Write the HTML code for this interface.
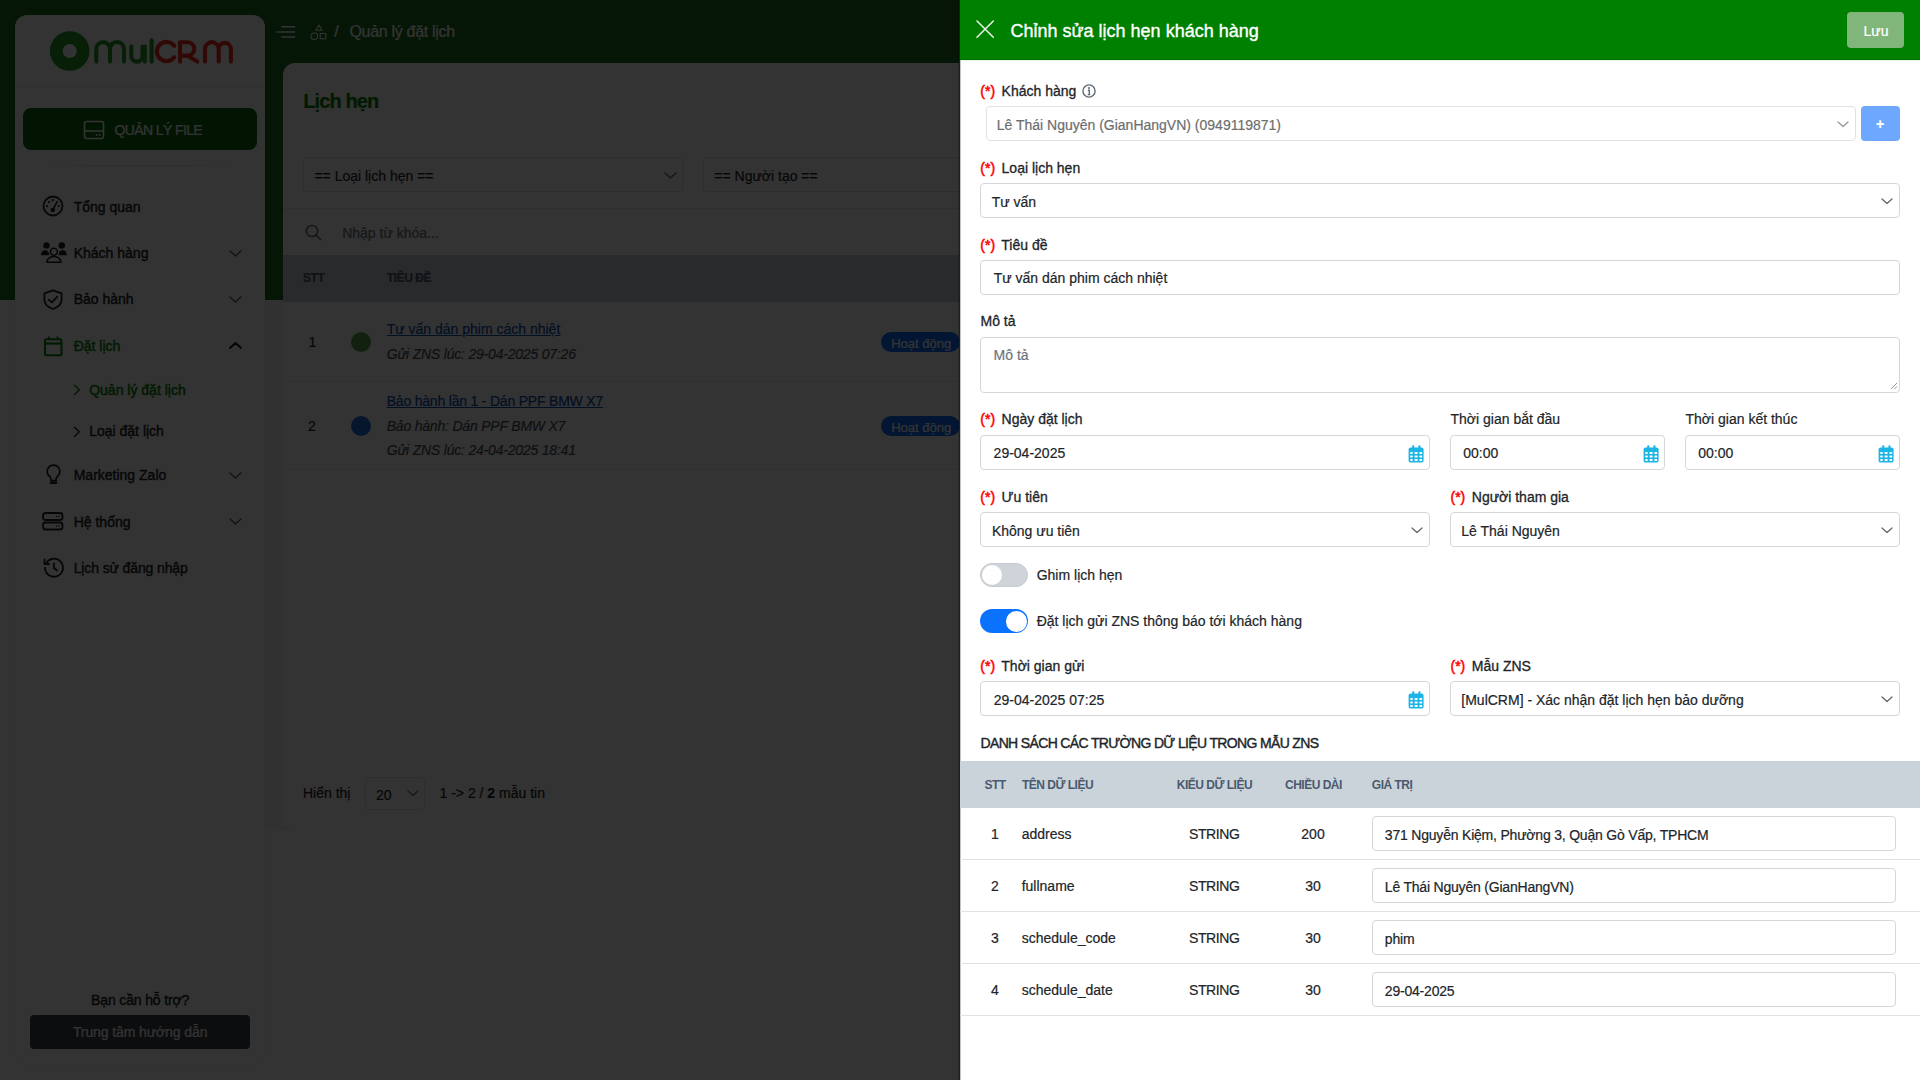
<!DOCTYPE html>
<html lang="vi">
<head>
<meta charset="utf-8">
<style>
*{box-sizing:border-box;margin:0;padding:0}
html,body{width:1920px;height:1080px;overflow:hidden}
body{font-family:"Liberation Sans",sans-serif;font-size:14px;color:#212529;background:#fff;position:relative}
.b{position:absolute}
.t{position:absolute;white-space:nowrap;-webkit-text-stroke:0.2px currentColor}
</style>
</head>
<body>

<div class="b" style="left:0px;top:0px;width:1920px;height:300px;background:#1e6e1e"></div>
<div class="b" style="left:265px;top:300px;width:1655px;height:530px;background:#f3f4f6"></div>
<div class="b" style="left:15px;top:15px;width:250px;height:1050px;background:#fff;border-radius:12px;box-shadow:0 0 3px rgba(0,0,0,.06)"></div>
<div class="b" style="left:283px;top:63px;width:1637px;height:767px;background:#fff;border-radius:12px"></div>
<svg class="b" style="left:45px;top:25px" width="200" height="55" viewBox="0 0 200 55">
<circle cx="24.7" cy="26" r="13.4" fill="none" stroke="#1f9a22" stroke-width="12.8"/>
<g fill="none" stroke="#1f9a22" stroke-width="4.1" stroke-linecap="round" stroke-linejoin="round">
<path d="M51.3 36.6V24a6.85 6.85 0 0 1 13.7 0V36.6M65 24a7 7 0 0 1 14 0V36.6"/>
<path d="M86.3 21.5V31a5.6 5.6 0 0 0 11.2 0V21.5M99.8 21.5V36.6"/>
<path d="M106.6 15.2V36.6"/>
</g>
<g fill="none" stroke="#f03020" stroke-width="4.1" stroke-linecap="round" stroke-linejoin="round">
<path d="M129.2 20.8A9.6 9.6 0 1 0 129.2 32.2"/>
<path d="M135.1 36.6V17.2h7.5a6.7 6.7 0 0 1 0 13.4h-7.5M142.3 30.6L152.3 36.6"/>
<path d="M160 36.6V24a6.85 6.85 0 0 1 13.7 0V36.6M173.7 24a6.1 6.1 0 0 1 12.2 0V36.6"/>
</g>
</svg>
<div class="b" style="left:15px;top:86px;width:250px;height:1px;background:#e9ecef"></div>
<div class="b" style="left:23px;top:108px;width:234px;height:42px;background:#0b6a12;border-radius:8px"></div>
<svg class="b" style="left:83px;top:120px" width="22" height="20" viewBox="0 0 22 20"><rect x="1.5" y="1.5" width="19" height="17" rx="2" fill="none" stroke="#fff" stroke-width="1.6"/><path d="M1.5 11h19" stroke="#fff" stroke-width="1.6"/><circle cx="13.5" cy="15" r="0.9" fill="#fff"/><circle cx="16.5" cy="15" r="0.9" fill="#fff"/></svg>
<div class="t" style="left:114.4px;top:122.85px;font-size:14px;line-height:14px;color:#fff;font-weight:400;font-style:normal;letter-spacing:-0.6px">QUẢN LÝ FILE</div>
<div class="b" style="left:40px;top:165px;width:200px;height:1px;background:linear-gradient(90deg,rgba(0,0,0,0),rgba(0,0,0,.12) 30%,rgba(0,0,0,.12) 70%,rgba(0,0,0,0))"></div>
<svg class="b" style="left:42px;top:195px" width="22" height="22" viewBox="0 0 22 22"><circle cx="11" cy="11" r="9.5" fill="none" stroke="#1e2226" stroke-width="1.8"/><circle cx="10.8" cy="5.2" r="1.1" fill="#1e2226"/><circle cx="6.9" cy="7.1" r="1.1" fill="#1e2226"/><circle cx="5" cy="11.1" r="1.1" fill="#1e2226"/><circle cx="16.8" cy="11.1" r="1.1" fill="#1e2226"/><path d="M15.2 6.6L11 14.6" stroke="#1e2226" stroke-width="1.6" stroke-linecap="round"/><circle cx="10.8" cy="15" r="2.2" fill="#1e2226"/></svg>
<div class="t" style="left:73.7px;top:199.85px;font-size:14px;line-height:14px;color:#1e2226;font-weight:400;font-style:normal;-webkit-text-stroke:0.4px">Tổng quan</div>
<svg class="b" style="left:40px;top:241px" width="28" height="23" viewBox="0 0 28 23"><circle cx="6.5" cy="4.4" r="3.2" fill="#1e2226"/><circle cx="21.8" cy="4.4" r="3.2" fill="#1e2226"/><path d="M0.9 14.2A4.25 5.2 0 0 1 9.4 14.2z" fill="#1e2226"/><path d="M18.3 14.2A4.3 5.2 0 0 1 26.9 14.2z" fill="#1e2226"/><circle cx="13.9" cy="10.7" r="3.5" fill="#fff" stroke="#fff" stroke-width="3.6"/><circle cx="13.9" cy="10.7" r="3.5" fill="none" stroke="#1e2226" stroke-width="1.6"/><path d="M6.9 21.3A7 5.8 0 0 1 20.9 21.3z" fill="none" stroke="#1e2226" stroke-width="1.6" stroke-linejoin="round"/></svg>
<div class="t" style="left:73.7px;top:245.55px;font-size:14px;line-height:14px;color:#1e2226;font-weight:400;font-style:normal;-webkit-text-stroke:0.4px">Khách hàng</div>
<svg class="b" style="left:228.5px;top:249.75px" width="13" height="7.5"><path d="M1 1 L6.5 6.0 L12 1" fill="none" stroke="#555" stroke-width="1.3" stroke-linecap="round" stroke-linejoin="round"/></svg>
<svg class="b" style="left:43px;top:288.5px" width="20" height="22" viewBox="0 0 20 22"><path d="M10 1.3L18.6 4.3V10.5C18.6 15 15 18.3 10 20 5 18.3 1.4 15 1.4 10.5V4.3z" fill="none" stroke="#1e2226" stroke-width="1.8" stroke-linejoin="round"/><path d="M5.8 10.6L8.8 13.4L14.2 7.8" fill="none" stroke="#1e2226" stroke-width="1.8" stroke-linecap="round" stroke-linejoin="round"/></svg>
<div class="t" style="left:73.7px;top:292.15px;font-size:14px;line-height:14px;color:#1e2226;font-weight:400;font-style:normal;-webkit-text-stroke:0.4px">Bảo hành</div>
<svg class="b" style="left:228.5px;top:296.35px" width="13" height="7.5"><path d="M1 1 L6.5 6.0 L12 1" fill="none" stroke="#555" stroke-width="1.3" stroke-linecap="round" stroke-linejoin="round"/></svg>
<svg class="b" style="left:44px;top:335.5px" width="19" height="21" viewBox="0 0 19 21"><rect x="1" y="3.2" width="16.5" height="16" rx="1.5" fill="none" stroke="#008000" stroke-width="2"/><path d="M1 7.5h16.5" stroke="#008000" stroke-width="2.2"/><path d="M5 0.5v3.5M13.5 0.5v3.5" stroke="#008000" stroke-width="1.8"/></svg>
<div class="t" style="left:73.7px;top:338.85px;font-size:14px;line-height:14px;color:#008000;font-weight:400;font-style:normal;-webkit-text-stroke:0.4px">Đặt lịch</div>
<svg class="b" style="left:228.5px;top:342.15px" width="13" height="7.5"><path d="M1 6.0 L6.5 1 L12 6.0" fill="none" stroke="#111" stroke-width="1.8" stroke-linecap="round" stroke-linejoin="round"/></svg>
<svg class="b" style="left:73px;top:384px" width="8" height="12"><path d="M1.5 1.2L6.3 5.8L1.5 10.4" fill="none" stroke="#008000" stroke-width="1.4" stroke-linecap="round" stroke-linejoin="round"/></svg>
<div class="t" style="left:89.2px;top:383.25px;font-size:14px;line-height:14px;color:#008000;font-weight:400;font-style:normal;-webkit-text-stroke:0.45px">Quản lý đặt lịch</div>
<svg class="b" style="left:73px;top:425.5px" width="8" height="12"><path d="M1.5 1.2L6.3 5.8L1.5 10.4" fill="none" stroke="#1e2226" stroke-width="1.4" stroke-linecap="round" stroke-linejoin="round"/></svg>
<div class="t" style="left:89.2px;top:424.15px;font-size:14px;line-height:14px;color:#1e2226;font-weight:400;font-style:normal;-webkit-text-stroke:0.4px">Loại đặt lịch</div>
<svg class="b" style="left:45.5px;top:464px" width="15" height="22" viewBox="0 0 15 22"><path d="M7.5 1.2a6.3 6.3 0 0 0 -3.8 11.3c0.8 0.7 1.2 1.6 1.2 2.6v1.6h5.2v-1.6c0-1 0.4-1.9 1.2-2.6A6.3 6.3 0 0 0 7.5 1.2z" fill="none" stroke="#1e2226" stroke-width="1.7" stroke-linejoin="round"/><path d="M4.9 18.8h5.2" stroke="#1e2226" stroke-width="2.4" stroke-linecap="round"/></svg>
<div class="t" style="left:73.7px;top:468.25px;font-size:14px;line-height:14px;color:#1e2226;font-weight:400;font-style:normal;-webkit-text-stroke:0.4px">Marketing Zalo</div>
<svg class="b" style="left:228.5px;top:471.75px" width="13" height="7.5"><path d="M1 1 L6.5 6.0 L12 1" fill="none" stroke="#555" stroke-width="1.3" stroke-linecap="round" stroke-linejoin="round"/></svg>
<svg class="b" style="left:42.3px;top:512px" width="22" height="19" viewBox="0 0 22 19"><rect x="1" y="1" width="19.5" height="7" rx="2.5" fill="none" stroke="#1e2226" stroke-width="1.8"/><rect x="1" y="10.5" width="19.5" height="7" rx="2.5" fill="none" stroke="#1e2226" stroke-width="1.8"/><circle cx="14.5" cy="4.5" r="0.8" fill="#1e2226"/><circle cx="17" cy="4.5" r="0.8" fill="#1e2226"/><circle cx="14.5" cy="14" r="0.8" fill="#1e2226"/><circle cx="17" cy="14" r="0.8" fill="#1e2226"/></svg>
<div class="t" style="left:73.7px;top:514.65px;font-size:14px;line-height:14px;color:#1e2226;font-weight:400;font-style:normal;-webkit-text-stroke:0.4px">Hệ thống</div>
<svg class="b" style="left:228.5px;top:518.35px" width="13" height="7.5"><path d="M1 1 L6.5 6.0 L12 1" fill="none" stroke="#555" stroke-width="1.3" stroke-linecap="round" stroke-linejoin="round"/></svg>
<svg class="b" style="left:42.5px;top:557px" width="22" height="22" viewBox="0 0 22 22"><path d="M3.2 6.2A9 9 0 1 1 2 11" fill="none" stroke="#1e2226" stroke-width="1.8" stroke-linecap="round"/><path d="M1.5 2.5V7H6" fill="none" stroke="#1e2226" stroke-width="1.8" stroke-linecap="round" stroke-linejoin="round"/><path d="M11 6.5V11L14 13.5" fill="none" stroke="#1e2226" stroke-width="1.8" stroke-linecap="round" stroke-linejoin="round"/></svg>
<div class="t" style="left:73.7px;top:560.85px;font-size:14px;line-height:14px;color:#1e2226;font-weight:400;font-style:normal;letter-spacing:-0.12px;-webkit-text-stroke:0.4px">Lịch sử đăng nhập</div>
<div class="t" style="left:91.1px;top:992.55px;font-size:14px;line-height:14px;color:#1e2226;font-weight:400;font-style:normal;letter-spacing:-0.15px;-webkit-text-stroke:0.4px">Bạn cần hỗ trợ?</div>
<div class="b" style="left:30px;top:1015px;width:220px;height:34px;background:#3d4349;border-radius:4px"></div>
<div class="t" style="left:72.9px;top:1025.35px;font-size:14px;line-height:14px;color:#fff;font-weight:400;font-style:normal;letter-spacing:-0.1px">Trung tâm hướng dẫn</div>
<svg class="b" style="left:276px;top:25px" width="20" height="14"><path d="M6 1.7H18.7M1 6.9H18.7M6 11.9H18.7" stroke="#fff" stroke-width="1.5" stroke-linecap="round"/></svg>
<svg class="b" style="left:310px;top:24px" width="17" height="17" viewBox="0 0 17 17"><path d="M8.9 1L12 6.2H5.8z" fill="none" stroke="#fff" stroke-width="1.1" stroke-linejoin="round"/><circle cx="4.3" cy="12.3" r="3.3" fill="none" stroke="#fff" stroke-width="1.1"/><rect x="10.2" y="9.5" width="5.6" height="5.3" fill="none" stroke="#fff" stroke-width="1.1"/></svg>
<div class="t" style="left:334.3px;top:24.36px;font-size:16px;line-height:16px;color:#fff;font-weight:400;font-style:normal;">/</div>
<div class="t" style="left:349.4px;top:24.36px;font-size:16px;line-height:16px;color:#fff;font-weight:400;font-style:normal;letter-spacing:-0.3px">Quản lý đặt lịch</div>
<div class="t" style="left:303.3px;top:90.87px;font-size:20px;line-height:20px;color:#008000;font-weight:700;font-style:normal;letter-spacing:-0.9px">Lịch hẹn</div>
<div class="b" style="left:303px;top:157px;width:380px;height:35px;background:#fff;border:1px solid #dee2e6;border-radius:4px"></div>
<div class="t" style="left:314.4px;top:169.15px;font-size:14px;line-height:14px;color:#1e2226;font-weight:400;font-style:normal;">== Loại lịch hẹn ==</div>
<svg class="b" style="left:663.5px;top:171.75px" width="13" height="7.5"><path d="M1 1 L6.5 6.0 L12 1" fill="none" stroke="#666" stroke-width="1.3" stroke-linecap="round" stroke-linejoin="round"/></svg>
<div class="b" style="left:703px;top:157px;width:397px;height:35px;background:#fff;border:1px solid #dee2e6;border-radius:4px"></div>
<div class="t" style="left:714.3px;top:169.05px;font-size:14px;line-height:14px;color:#1e2226;font-weight:400;font-style:normal;">== Người tạo ==</div>
<div class="b" style="left:283px;top:208px;width:1637px;height:1px;background:#e9ecef"></div>
<svg class="b" style="left:305px;top:224px" width="17" height="17"><circle cx="7" cy="7" r="5.6" fill="none" stroke="#666" stroke-width="1.5"/><path d="M11.2 11.2L15.5 15.5" stroke="#666" stroke-width="1.5" stroke-linecap="round"/></svg>
<div class="t" style="left:342.2px;top:225.95px;font-size:14px;line-height:14px;color:#6c757d;font-weight:400;font-style:normal;">Nhập từ khóa...</div>
<div class="b" style="left:283px;top:255px;width:1637px;height:47px;background:#cbd3da"></div>
<div class="t" style="left:303px;top:271.84px;font-size:12px;line-height:12px;color:#4a5a6e;font-weight:700;font-style:normal;letter-spacing:-0.4px">STT</div>
<div class="t" style="left:386.7px;top:271.84px;font-size:12px;line-height:12px;color:#4a5a6e;font-weight:700;font-style:normal;letter-spacing:-0.4px">TIÊU ĐỀ</div>
<div class="t" style="left:308.5px;top:335.15px;font-size:14px;line-height:14px;color:#1e2226;font-weight:400;font-style:normal;">1</div>
<div class="b" style="left:350.7px;top:332px;width:20.0px;height:20px;background:#5aa34a;border-radius:50%"></div>
<div class="t" style="left:386.7px;top:322.15px;font-size:14px;line-height:14px;color:#0a4fb5;font-weight:400;font-style:normal;text-decoration:underline">Tư vấn dán phim cách nhiệt</div>
<div class="t" style="left:386.7px;top:347.05px;font-size:14px;line-height:14px;color:#495057;font-weight:400;font-style:italic;letter-spacing:-0.2px">Gửi ZNS lúc: 29-04-2025 07:26</div>
<div class="b" style="left:881px;top:332px;width:79px;height:20px;background:#0d6efd;border-radius:10px"></div>
<div class="t" style="left:891.2px;top:336.50px;font-size:13px;line-height:13px;color:#fff;font-weight:400;font-style:normal;">Hoạt động</div>
<div class="b" style="left:283px;top:381px;width:1637px;height:1px;background:#e9ecef"></div>
<div class="t" style="left:308px;top:419.15px;font-size:14px;line-height:14px;color:#1e2226;font-weight:400;font-style:normal;">2</div>
<div class="b" style="left:350.7px;top:416px;width:20.0px;height:20px;background:#1e6fd9;border-radius:50%"></div>
<div class="t" style="left:386.7px;top:393.75px;font-size:14px;line-height:14px;color:#0a4fb5;font-weight:400;font-style:normal;text-decoration:underline;letter-spacing:-0.2px">Bảo hành lần 1 - Dán PPF BMW X7</div>
<div class="t" style="left:386.7px;top:418.55px;font-size:14px;line-height:14px;color:#495057;font-weight:400;font-style:italic;letter-spacing:-0.2px">Bảo hành: Dán PPF BMW X7</div>
<div class="t" style="left:386.7px;top:443.05px;font-size:14px;line-height:14px;color:#495057;font-weight:400;font-style:italic;letter-spacing:-0.2px">Gửi ZNS lúc: 24-04-2025 18:41</div>
<div class="b" style="left:881px;top:416px;width:79px;height:20px;background:#0d6efd;border-radius:10px"></div>
<div class="t" style="left:891.2px;top:420.50px;font-size:13px;line-height:13px;color:#fff;font-weight:400;font-style:normal;">Hoạt động</div>
<div class="b" style="left:283px;top:469px;width:1637px;height:1px;background:#e9ecef"></div>
<div class="t" style="left:303px;top:785.85px;font-size:14px;line-height:14px;color:#1e2226;font-weight:400;font-style:normal;">Hiển thị</div>
<div class="b" style="left:365px;top:776.5px;width:59.5px;height:33.5px;background:#fff;border:1px solid #dee2e6;border-radius:4px"></div>
<div class="t" style="left:376px;top:788.15px;font-size:14px;line-height:14px;color:#1e2226;font-weight:400;font-style:normal;">20</div>
<svg class="b" style="left:407.0px;top:790.0px" width="12" height="7.0"><path d="M1 1 L6.0 5.5 L11 1" fill="none" stroke="#777" stroke-width="1.3" stroke-linecap="round" stroke-linejoin="round"/></svg>
<div class="t" style="left:439.5px;top:785.85px;font-size:14px;line-height:14px;color:#1e2226;font-weight:400;font-style:normal;">1 -&gt; 2 / <b>2</b> mẫu tin</div>
<div class="b" style="left:0px;top:0px;width:1920px;height:1080px;background:rgba(0,0,0,.8)"></div>
<div class="b" style="left:958px;top:0px;width:1px;height:1080px;background:rgba(0,0,0,.15)"></div>
<div class="b" style="left:959px;top:0px;width:1px;height:1080px;background:#1f1f1f"></div>
<div class="b" style="left:960px;top:0px;width:960px;height:1080px;background:#fff"></div>
<div class="b" style="left:960px;top:0px;width:960px;height:60px;background:#008000"></div>
<div class="b" style="left:960px;top:59px;width:960px;height:1px;background:#007400"></div>
<div class="b" style="left:960px;top:60px;width:960px;height:1px;background:#e6f2e6"></div>
<div class="b" style="left:960px;top:60px;width:1px;height:1020px;background:#c4c4c4"></div>
<svg class="b" style="left:975px;top:19px" width="21" height="21"><path d="M2 2L18.3 18.3M18.3 2L2 18.3" stroke="#e6efe6" stroke-width="1.6" stroke-linecap="round"/></svg>
<div class="t" style="left:1010.5px;top:21.76px;font-size:18px;line-height:18px;color:#fff;font-weight:400;font-style:normal;-webkit-text-stroke:0.35px">Chỉnh sửa lịch hẹn khách hàng</div>
<div class="b" style="left:1847px;top:12px;width:57px;height:36px;background:#80b67a;border-radius:4px"></div>
<div class="t" style="left:1863.5px;top:23.95px;font-size:14px;line-height:14px;color:#fff;font-weight:400;font-style:normal;">Lưu</div>
<div class="t" style="left:980.3px;top:83.95px;font-size:14px;line-height:14px;color:#212529;font-weight:400;font-style:normal;-webkit-text-stroke:0.3px"><span style="color:#f00;-webkit-text-stroke:0.5px #f00;margin-right:2.6px">(*)</span> Khách hàng</div>
<svg class="b" style="left:1082px;top:84px" width="14" height="14" viewBox="0 0 14 14"><circle cx="7" cy="7" r="6.1" fill="none" stroke="#5f6b77" stroke-width="1.4"/><circle cx="7" cy="4.1" r="1" fill="#5f6b77"/><path d="M5.9 6.3h1.4v4.3M5.7 10.6h2.6" stroke="#5f6b77" stroke-width="1.4" fill="none"/></svg>
<div class="b" style="left:986px;top:106px;width:870px;height:35px;background:#fff;border:1px solid #dee2e6;border-radius:4px"></div>
<div class="t" style="left:996.7px;top:118.15px;font-size:14px;line-height:14px;color:#6e6e6e;font-weight:400;font-style:normal;">Lê Thái Nguyên (GianHangVN) (0949119871)</div>
<svg class="b" style="left:1836.5px;top:120.5px" width="12" height="7.0"><path d="M1 1 L6.0 5.5 L11 1" fill="none" stroke="#999" stroke-width="1.3" stroke-linecap="round" stroke-linejoin="round"/></svg>
<div class="b" style="left:1861px;top:106px;width:39px;height:35px;background:#6ea8fe;border-radius:4px"></div>
<div class="t" style="left:1876px;top:116.65px;font-size:14px;line-height:14px;color:#fff;font-weight:700;font-style:normal;">+</div>
<div class="t" style="left:980.3px;top:160.65px;font-size:14px;line-height:14px;color:#212529;font-weight:400;font-style:normal;-webkit-text-stroke:0.3px"><span style="color:#f00;-webkit-text-stroke:0.5px #f00;margin-right:2.6px">(*)</span> Loại lịch hẹn</div>
<div class="b" style="left:980px;top:183px;width:920px;height:35px;background:#fff;border:1px solid #d3d8dd;border-radius:4px"></div>
<div class="t" style="left:991.7px;top:195.15px;font-size:14px;line-height:14px;color:#212529;font-weight:400;font-style:normal;">Tư vấn</div>
<svg class="b" style="left:1881.0px;top:197.5px" width="12" height="7.0"><path d="M1 1 L6.0 5.5 L11 1" fill="none" stroke="#666" stroke-width="1.3" stroke-linecap="round" stroke-linejoin="round"/></svg>
<div class="t" style="left:980.3px;top:237.85px;font-size:14px;line-height:14px;color:#212529;font-weight:400;font-style:normal;-webkit-text-stroke:0.3px"><span style="color:#f00;-webkit-text-stroke:0.5px #f00;margin-right:2.6px">(*)</span> Tiêu đề</div>
<div class="b" style="left:980px;top:260px;width:920px;height:35px;background:#fff;border:1px solid #d3d8dd;border-radius:4px"></div>
<div class="t" style="left:993.7px;top:271.45px;font-size:14px;line-height:14px;color:#212529;font-weight:400;font-style:normal;">Tư vấn dán phim cách nhiệt</div>
<div class="t" style="left:980.5px;top:314.35px;font-size:14px;line-height:14px;color:#212529;font-weight:400;font-style:normal;-webkit-text-stroke:0.3px">Mô tả</div>
<div class="b" style="left:980px;top:337px;width:920px;height:56px;background:#fff;border:1px solid #d3d8dd;border-radius:4px"></div>
<div class="t" style="left:993.6px;top:347.75px;font-size:14px;line-height:14px;color:#6c757d;font-weight:400;font-style:normal;">Mô tả</div>
<svg class="b" style="left:1890px;top:382px" width="8" height="8"><path d="M7 1L1 7M7 4.5L4.5 7" stroke="#888" stroke-width="0.9"/></svg>
<div class="t" style="left:980.3px;top:412.35px;font-size:14px;line-height:14px;color:#212529;font-weight:400;font-style:normal;-webkit-text-stroke:0.3px"><span style="color:#f00;-webkit-text-stroke:0.5px #f00;margin-right:2.6px">(*)</span> Ngày đặt lịch</div>
<div class="t" style="left:1450.5px;top:412.35px;font-size:14px;line-height:14px;color:#212529;font-weight:400;font-style:normal;">Thời gian bắt đầu</div>
<div class="t" style="left:1685.5px;top:412.35px;font-size:14px;line-height:14px;color:#212529;font-weight:400;font-style:normal;">Thời gian kết thúc</div>
<div class="b" style="left:980px;top:435px;width:450px;height:35px;background:#fff;border:1px solid #d3d8dd;border-radius:4px"></div>
<div class="b" style="left:1450px;top:435px;width:215px;height:35px;background:#fff;border:1px solid #d3d8dd;border-radius:4px"></div>
<div class="b" style="left:1685px;top:435px;width:215px;height:35px;background:#fff;border:1px solid #d3d8dd;border-radius:4px"></div>
<div class="t" style="left:993.6px;top:446.15px;font-size:14px;line-height:14px;color:#212529;font-weight:400;font-style:normal;">29-04-2025</div>
<div class="t" style="left:1463.3px;top:446.15px;font-size:14px;line-height:14px;color:#212529;font-weight:400;font-style:normal;">00:00</div>
<div class="t" style="left:1698.3px;top:446.15px;font-size:14px;line-height:14px;color:#212529;font-weight:400;font-style:normal;">00:00</div>
<svg class="b" style="left:1408.2px;top:444.6px" width="17" height="19" viewBox="0 0 17 19"><rect x="0.6" y="2.4" width="15" height="15.2" rx="2.2" fill="#1cb5e6"/><rect x="4.2" y="0.2" width="2.1" height="4" rx="0.8" fill="#1cb5e6"/><rect x="10.4" y="0.2" width="2.1" height="4" rx="0.8" fill="#1cb5e6"/><rect x="2.20" y="7.10" width="2.6" height="1.9" rx="0.7" fill="#fff"/><rect x="6.50" y="7.10" width="3.2" height="1.9" rx="0.7" fill="#fff"/><rect x="11.30" y="7.10" width="2.9" height="1.9" rx="0.7" fill="#fff"/><rect x="2.20" y="10.60" width="2.6" height="1.9" rx="0.7" fill="#fff"/><rect x="6.50" y="10.60" width="3.2" height="1.9" rx="0.7" fill="#fff"/><rect x="11.30" y="10.60" width="2.9" height="1.9" rx="0.7" fill="#fff"/><rect x="2.20" y="14.10" width="2.6" height="1.9" rx="0.7" fill="#fff"/><rect x="6.50" y="14.10" width="3.2" height="1.9" rx="0.7" fill="#fff"/><rect x="11.30" y="14.10" width="2.9" height="1.9" rx="0.7" fill="#fff"/></svg>
<svg class="b" style="left:1643.2px;top:444.6px" width="17" height="19" viewBox="0 0 17 19"><rect x="0.6" y="2.4" width="15" height="15.2" rx="2.2" fill="#1cb5e6"/><rect x="4.2" y="0.2" width="2.1" height="4" rx="0.8" fill="#1cb5e6"/><rect x="10.4" y="0.2" width="2.1" height="4" rx="0.8" fill="#1cb5e6"/><rect x="2.20" y="7.10" width="2.6" height="1.9" rx="0.7" fill="#fff"/><rect x="6.50" y="7.10" width="3.2" height="1.9" rx="0.7" fill="#fff"/><rect x="11.30" y="7.10" width="2.9" height="1.9" rx="0.7" fill="#fff"/><rect x="2.20" y="10.60" width="2.6" height="1.9" rx="0.7" fill="#fff"/><rect x="6.50" y="10.60" width="3.2" height="1.9" rx="0.7" fill="#fff"/><rect x="11.30" y="10.60" width="2.9" height="1.9" rx="0.7" fill="#fff"/><rect x="2.20" y="14.10" width="2.6" height="1.9" rx="0.7" fill="#fff"/><rect x="6.50" y="14.10" width="3.2" height="1.9" rx="0.7" fill="#fff"/><rect x="11.30" y="14.10" width="2.9" height="1.9" rx="0.7" fill="#fff"/></svg>
<svg class="b" style="left:1878.2px;top:444.6px" width="17" height="19" viewBox="0 0 17 19"><rect x="0.6" y="2.4" width="15" height="15.2" rx="2.2" fill="#1cb5e6"/><rect x="4.2" y="0.2" width="2.1" height="4" rx="0.8" fill="#1cb5e6"/><rect x="10.4" y="0.2" width="2.1" height="4" rx="0.8" fill="#1cb5e6"/><rect x="2.20" y="7.10" width="2.6" height="1.9" rx="0.7" fill="#fff"/><rect x="6.50" y="7.10" width="3.2" height="1.9" rx="0.7" fill="#fff"/><rect x="11.30" y="7.10" width="2.9" height="1.9" rx="0.7" fill="#fff"/><rect x="2.20" y="10.60" width="2.6" height="1.9" rx="0.7" fill="#fff"/><rect x="6.50" y="10.60" width="3.2" height="1.9" rx="0.7" fill="#fff"/><rect x="11.30" y="10.60" width="2.9" height="1.9" rx="0.7" fill="#fff"/><rect x="2.20" y="14.10" width="2.6" height="1.9" rx="0.7" fill="#fff"/><rect x="6.50" y="14.10" width="3.2" height="1.9" rx="0.7" fill="#fff"/><rect x="11.30" y="14.10" width="2.9" height="1.9" rx="0.7" fill="#fff"/></svg>
<div class="t" style="left:980.3px;top:489.95px;font-size:14px;line-height:14px;color:#212529;font-weight:400;font-style:normal;-webkit-text-stroke:0.3px"><span style="color:#f00;-webkit-text-stroke:0.5px #f00;margin-right:2.6px">(*)</span> Ưu tiên</div>
<div class="t" style="left:1450.5px;top:489.95px;font-size:14px;line-height:14px;color:#212529;font-weight:400;font-style:normal;-webkit-text-stroke:0.3px"><span style="color:#f00;-webkit-text-stroke:0.5px #f00;margin-right:2.6px">(*)</span> Người tham gia</div>
<div class="b" style="left:980px;top:512px;width:450px;height:35px;background:#fff;border:1px solid #d3d8dd;border-radius:4px"></div>
<div class="b" style="left:1450px;top:512px;width:450px;height:35px;background:#fff;border:1px solid #d3d8dd;border-radius:4px"></div>
<div class="t" style="left:991.9px;top:524.15px;font-size:14px;line-height:14px;color:#212529;font-weight:400;font-style:normal;">Không ưu tiên</div>
<div class="t" style="left:1461.3px;top:524.15px;font-size:14px;line-height:14px;color:#212529;font-weight:400;font-style:normal;">Lê Thái Nguyên</div>
<svg class="b" style="left:1410.5px;top:526.5px" width="12" height="7.0"><path d="M1 1 L6.0 5.5 L11 1" fill="none" stroke="#666" stroke-width="1.3" stroke-linecap="round" stroke-linejoin="round"/></svg>
<svg class="b" style="left:1880.5px;top:526.5px" width="12" height="7.0"><path d="M1 1 L6.0 5.5 L11 1" fill="none" stroke="#666" stroke-width="1.3" stroke-linecap="round" stroke-linejoin="round"/></svg>
<div class="b" style="left:980px;top:563px;width:48px;height:24px;background:#ced4da;border-radius:12px;border:1px solid #c4cad0"></div>
<div class="b" style="left:982px;top:565px;width:20px;height:20px;background:#fff;border-radius:50%"></div>
<div class="t" style="left:1036.7px;top:568.45px;font-size:14px;line-height:14px;color:#212529;font-weight:400;font-style:normal;">Ghim lịch hẹn</div>
<div class="b" style="left:980px;top:609px;width:48px;height:24px;background:#0b72fd;border-radius:12px"></div>
<div class="b" style="left:1006px;top:611px;width:20.5px;height:20.5px;background:#fff;border-radius:50%"></div>
<div class="t" style="left:1036.7px;top:614.15px;font-size:14px;line-height:14px;color:#212529;font-weight:400;font-style:normal;">Đặt lịch gửi ZNS thông báo tới khách hàng</div>
<div class="t" style="left:980.3px;top:659.45px;font-size:14px;line-height:14px;color:#212529;font-weight:400;font-style:normal;-webkit-text-stroke:0.3px"><span style="color:#f00;-webkit-text-stroke:0.5px #f00;margin-right:2.6px">(*)</span> Thời gian gửi</div>
<div class="t" style="left:1450.5px;top:659.45px;font-size:14px;line-height:14px;color:#212529;font-weight:400;font-style:normal;-webkit-text-stroke:0.3px"><span style="color:#f00;-webkit-text-stroke:0.5px #f00;margin-right:2.6px">(*)</span> Mẫu ZNS</div>
<div class="b" style="left:980px;top:681px;width:450px;height:35px;background:#fff;border:1px solid #d3d8dd;border-radius:4px"></div>
<div class="b" style="left:1450px;top:681px;width:450px;height:35px;background:#fff;border:1px solid #d3d8dd;border-radius:4px"></div>
<div class="t" style="left:993.7px;top:692.65px;font-size:14px;line-height:14px;color:#212529;font-weight:400;font-style:normal;">29-04-2025 07:25</div>
<svg class="b" style="left:1408.2px;top:690.6px" width="17" height="19" viewBox="0 0 17 19"><rect x="0.6" y="2.4" width="15" height="15.2" rx="2.2" fill="#1cb5e6"/><rect x="4.2" y="0.2" width="2.1" height="4" rx="0.8" fill="#1cb5e6"/><rect x="10.4" y="0.2" width="2.1" height="4" rx="0.8" fill="#1cb5e6"/><rect x="2.20" y="7.10" width="2.6" height="1.9" rx="0.7" fill="#fff"/><rect x="6.50" y="7.10" width="3.2" height="1.9" rx="0.7" fill="#fff"/><rect x="11.30" y="7.10" width="2.9" height="1.9" rx="0.7" fill="#fff"/><rect x="2.20" y="10.60" width="2.6" height="1.9" rx="0.7" fill="#fff"/><rect x="6.50" y="10.60" width="3.2" height="1.9" rx="0.7" fill="#fff"/><rect x="11.30" y="10.60" width="2.9" height="1.9" rx="0.7" fill="#fff"/><rect x="2.20" y="14.10" width="2.6" height="1.9" rx="0.7" fill="#fff"/><rect x="6.50" y="14.10" width="3.2" height="1.9" rx="0.7" fill="#fff"/><rect x="11.30" y="14.10" width="2.9" height="1.9" rx="0.7" fill="#fff"/></svg>
<div class="t" style="left:1461.3px;top:692.65px;font-size:14px;line-height:14px;color:#212529;font-weight:400;font-style:normal;">[MulCRM] - Xác nhận đặt lịch hẹn bảo dưỡng</div>
<svg class="b" style="left:1880.5px;top:696.0px" width="12" height="7.0"><path d="M1 1 L6.0 5.5 L11 1" fill="none" stroke="#666" stroke-width="1.3" stroke-linecap="round" stroke-linejoin="round"/></svg>
<div class="t" style="left:980.5px;top:736.15px;font-size:14px;line-height:14px;color:#212529;font-weight:400;font-style:normal;letter-spacing:-0.65px;-webkit-text-stroke:0.4px">DANH SÁCH CÁC TRƯỜNG DỮ LIỆU TRONG MẪU ZNS</div>
<div class="b" style="left:960px;top:761px;width:960px;height:47px;background:#cbd3da"></div>
<div class="t" style="left:984.5px;top:779.14px;font-size:12px;line-height:12px;color:#4a5a6e;font-weight:700;font-style:normal;letter-spacing:-0.5px;-webkit-text-stroke:0">STT</div>
<div class="t" style="left:1022px;top:779.14px;font-size:12px;line-height:12px;color:#4a5a6e;font-weight:700;font-style:normal;letter-spacing:-0.5px;-webkit-text-stroke:0">TÊN DỮ LIỆU</div>
<div class="t" style="left:1176.8px;top:779.14px;font-size:12px;line-height:12px;color:#4a5a6e;font-weight:700;font-style:normal;letter-spacing:-0.5px;-webkit-text-stroke:0">KIỂU DỮ LIỆU</div>
<div class="t" style="left:1285px;top:779.14px;font-size:12px;line-height:12px;color:#4a5a6e;font-weight:700;font-style:normal;letter-spacing:-0.5px;-webkit-text-stroke:0">CHIỀU DÀI</div>
<div class="t" style="left:1371.8px;top:779.14px;font-size:12px;line-height:12px;color:#4a5a6e;font-weight:700;font-style:normal;letter-spacing:-0.5px;-webkit-text-stroke:0">GIÁ TRỊ</div>
<div class="t" style="left:991px;top:827.15px;font-size:14px;line-height:14px;color:#212529;font-weight:400;font-style:normal;width:8px;text-align:center">1</div>
<div class="t" style="left:1021.7px;top:827.15px;font-size:14px;line-height:14px;color:#212529;font-weight:400;font-style:normal;">address</div>
<div class="t" style="left:1189px;top:827.15px;font-size:14px;line-height:14px;color:#212529;font-weight:400;font-style:normal;letter-spacing:-0.4px">STRING</div>
<div class="t" style="left:1283px;width:60px;text-align:center;top:827.15px;font-size:14px;line-height:14px;color:#212529">200</div>
<div class="b" style="left:960px;top:859px;width:960px;height:1px;background:#dee2e6"></div>
<div class="b" style="left:1372px;top:816px;width:524px;height:35px;background:#fff;border:1px solid #d3d8dd;border-radius:4px"></div>
<div class="t" style="left:1384.8px;top:827.65px;font-size:14px;line-height:14px;color:#212529;font-weight:400;font-style:normal;letter-spacing:-0.2px">371 Nguyễn Kiệm, Phường 3, Quận Gò Vấp, TPHCM</div>
<div class="t" style="left:991px;top:879.15px;font-size:14px;line-height:14px;color:#212529;font-weight:400;font-style:normal;width:8px;text-align:center">2</div>
<div class="t" style="left:1021.7px;top:879.15px;font-size:14px;line-height:14px;color:#212529;font-weight:400;font-style:normal;">fullname</div>
<div class="t" style="left:1189px;top:879.15px;font-size:14px;line-height:14px;color:#212529;font-weight:400;font-style:normal;letter-spacing:-0.4px">STRING</div>
<div class="t" style="left:1283px;width:60px;text-align:center;top:879.15px;font-size:14px;line-height:14px;color:#212529">30</div>
<div class="b" style="left:960px;top:911px;width:960px;height:1px;background:#dee2e6"></div>
<div class="b" style="left:1372px;top:868px;width:524px;height:35px;background:#fff;border:1px solid #d3d8dd;border-radius:4px"></div>
<div class="t" style="left:1384.8px;top:879.65px;font-size:14px;line-height:14px;color:#212529;font-weight:400;font-style:normal;letter-spacing:-0.2px">Lê Thái Nguyên (GianHangVN)</div>
<div class="t" style="left:991px;top:931.15px;font-size:14px;line-height:14px;color:#212529;font-weight:400;font-style:normal;width:8px;text-align:center">3</div>
<div class="t" style="left:1021.7px;top:931.15px;font-size:14px;line-height:14px;color:#212529;font-weight:400;font-style:normal;">schedule_code</div>
<div class="t" style="left:1189px;top:931.15px;font-size:14px;line-height:14px;color:#212529;font-weight:400;font-style:normal;letter-spacing:-0.4px">STRING</div>
<div class="t" style="left:1283px;width:60px;text-align:center;top:931.15px;font-size:14px;line-height:14px;color:#212529">30</div>
<div class="b" style="left:960px;top:963px;width:960px;height:1px;background:#dee2e6"></div>
<div class="b" style="left:1372px;top:920px;width:524px;height:35px;background:#fff;border:1px solid #d3d8dd;border-radius:4px"></div>
<div class="t" style="left:1384.8px;top:931.65px;font-size:14px;line-height:14px;color:#212529;font-weight:400;font-style:normal;letter-spacing:-0.2px">phim</div>
<div class="t" style="left:991px;top:983.15px;font-size:14px;line-height:14px;color:#212529;font-weight:400;font-style:normal;width:8px;text-align:center">4</div>
<div class="t" style="left:1021.7px;top:983.15px;font-size:14px;line-height:14px;color:#212529;font-weight:400;font-style:normal;">schedule_date</div>
<div class="t" style="left:1189px;top:983.15px;font-size:14px;line-height:14px;color:#212529;font-weight:400;font-style:normal;letter-spacing:-0.4px">STRING</div>
<div class="t" style="left:1283px;width:60px;text-align:center;top:983.15px;font-size:14px;line-height:14px;color:#212529">30</div>
<div class="b" style="left:960px;top:1015px;width:960px;height:1px;background:#dee2e6"></div>
<div class="b" style="left:1372px;top:972px;width:524px;height:35px;background:#fff;border:1px solid #d3d8dd;border-radius:4px"></div>
<div class="t" style="left:1384.8px;top:983.65px;font-size:14px;line-height:14px;color:#212529;font-weight:400;font-style:normal;letter-spacing:-0.2px">29-04-2025</div>
</body>
</html>
